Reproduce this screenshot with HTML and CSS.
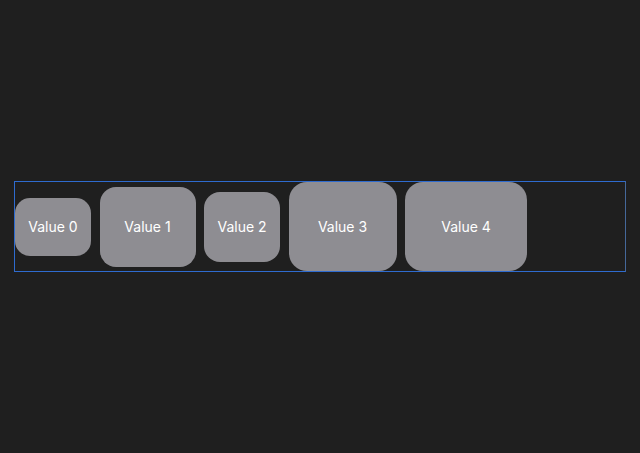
FILE: index.html
```html
<!DOCTYPE html>
<html>
<head>
<meta charset="utf-8">
<link rel="stylesheet" href="styles.css">
</head>
<body>
<div class="stack">
  <div class="item i0">Value 0</div>
  <div class="item i1">Value 1</div>
  <div class="item i2">Value 2</div>
  <div class="item i3">Value 3</div>
  <div class="item i4">Value 4</div>
</div>
</body>
</html>
```
FILE: styles.css
```css
html, body {
  margin: 0;
  height: 100%;
  background: #1f1f1f;
}
body {
  padding: 181px 14px 0;
  box-sizing: border-box;
  font-family: Inter, "Noto Sans", "Liberation Sans", sans-serif;
}
.stack {
  height: 89px;
  border: 1px solid #2e6bcf;
  border-right-color: #45689a;
  display: flex;
  align-items: center;
  gap: 8.5px;
}
.item {
  background: #8e8d92;
  color: #ffffff;
  font-size: 14px;
  display: flex;
  align-items: center;
  justify-content: center;
  border-radius: 16px;
  flex: none;
}
.i0 { width: 76px; height: 58px; border-radius: 15px; }
.i1 { width: 96px; height: 80px; }
.i2 { width: 76px; height: 70px; }
.i3 { width: 108px; height: 89px; border-radius: 18px; }
.i4 { width: 122px; height: 89px; border-radius: 18px; }
```
